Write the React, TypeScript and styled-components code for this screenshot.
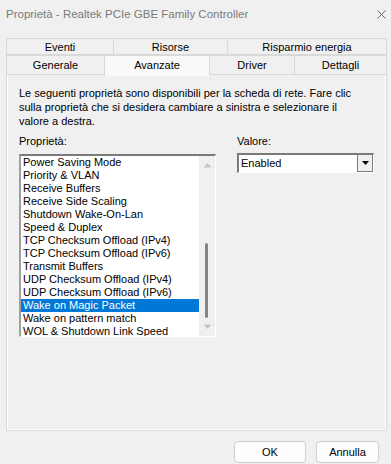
import styled, { createGlobalStyle } from 'styled-components';

const GlobalStyle = createGlobalStyle`
  html, body {
    margin: 0;
    padding: 0;
    background: #f0f0f0;
  }
  body {
    font-family: "Liberation Sans", Arial, sans-serif;
    font-size: 11px;
    color: #000;
  }
`;

const Window = styled.div`
  width: 391px;
  height: 464px;
  display: flex;
  flex-direction: column;
  background: #f0f0f0;
  overflow: hidden;
`;

const TitleBar = styled.div`
  height: 28px;
  display: flex;
  align-items: center;
  justify-content: space-between;
  padding: 0 4px 0 6px;
  color: #7a7a7a;
  font-size: 11.5px;
`;

const CloseIcon = styled.svg`
  width: 9px;
  height: 9px;
  margin-right: 1px;
`;

const TabStrip = styled.div`
  margin: 10px 4px 0 6px;
  display: flex;
  flex-direction: column;
`;

const TabRow = styled.div<{ $cols: string; $height: number }>`
  display: grid;
  grid-template-columns: ${(p) => p.$cols};
  height: ${(p) => p.$height}px;
  align-items: end;
`;

const Tab = styled.div<{ $active?: boolean }>`
  box-sizing: border-box;
  height: ${(p) => (p.$active ? '21px' : '100%')};
  margin-bottom: ${(p) => (p.$active ? '-1px' : '0')};
  display: flex;
  align-items: center;
  justify-content: center;
  padding-bottom: ${(p) => (p.$active ? '3px' : '0')};
  background: ${(p) => (p.$active ? '#f9f9f9' : '#f0f0f0')};
  border: 1px solid #d9d9d9;
  border-bottom: ${(p) => (p.$active ? 'none' : '1px solid #d9d9d9')};
  border-right: none;
  position: relative;
  z-index: ${(p) => (p.$active ? 2 : 1)};
  &:last-child {
    border-right: 1px solid #d9d9d9;
  }
`;

const Panel = styled.div`
  box-sizing: border-box;
  margin: 0 4px 0 6px;
  height: 358px;
  border: 1px solid #d9d9d9;
  box-shadow: inset 1px 1px 0 #fff, inset -1px -1px 0 #fff;
  background: #f0f0f0;
  padding: 12px 12px 0 12px;
`;

const Description = styled.p`
  margin: 0;
  line-height: 14px;
  white-space: nowrap;
`;

const Fields = styled.div`
  margin-top: 7px;
  display: grid;
  grid-template-columns: 197px 137px;
  column-gap: 21px;
`;

const Label = styled.div<{ $h: number }>`
  height: ${(p) => p.$h}px;
  line-height: 13px;
`;

const ListBox = styled.div`
  box-sizing: border-box;
  height: 183px;
  background: #fff;
  border-style: solid;
  border-width: 2px 1px 1px 2px;
  border-color: #7a7a7a #fff #fff #a0a0a0;
  display: flex;
  overflow: hidden;
`;

const Items = styled.div`
  flex: 1;
  display: flex;
  flex-direction: column;
`;

const Item = styled.div<{ $selected?: boolean }>`
  height: 13px;
  line-height: 13px;
  padding-left: 2px;
  white-space: nowrap;
  background: ${(p) => (p.$selected ? '#0078d7' : 'transparent')};
  color: ${(p) => (p.$selected ? '#fff' : '#000')};
`;

const ScrollBar = styled.div`
  width: 16px;
  background: #f0f0f0;
  display: flex;
  flex-direction: column;
  align-items: center;
  justify-content: space-between;
  padding: 6px 0;
  box-sizing: border-box;
  position: relative;
`;

const Thumb = styled.div`
  position: absolute;
  left: 6px;
  top: 87px;
  width: 3px;
  height: 75px;
  border-radius: 2px;
  background: #858585;
`;

const Arrow = styled.svg`
  width: 9px;
  height: 6px;
`;

const Select = styled.div`
  box-sizing: border-box;
  height: 20px;
  background: #fff;
  border-style: solid;
  border-width: 2px 1px 1px 2px;
  border-color: #7a7a7a #fff #fff #7a7a7a;
  display: flex;
  align-items: stretch;
`;

const SelectValue = styled.div`
  flex: 1;
  padding-left: 2px;
  line-height: 16px;
`;

const SelectButton = styled.div`
  box-sizing: border-box;
  width: 16px;
  background: #f0f0f0;
  border: 1px solid #7a7a7a;
  border-top: none;
  display: flex;
  align-items: center;
  justify-content: center;
`;

const Footer = styled.div`
  flex: 1;
  display: flex;
  justify-content: flex-end;
  align-items: flex-start;
  gap: 10px;
  padding: 10px 12px 0 0;
`;

const Button = styled.div<{ $w: number }>`
  box-sizing: border-box;
  width: ${(p) => p.$w}px;
  height: 22px;
  background: #fdfdfd;
  border: 1px solid #cfcfcf;
  border-radius: 4px;
  display: flex;
  align-items: center;
  justify-content: center;
`;

const properties = [
  'Power Saving Mode',
  'Priority & VLAN',
  'Receive Buffers',
  'Receive Side Scaling',
  'Shutdown Wake-On-Lan',
  'Speed & Duplex',
  'TCP Checksum Offload (IPv4)',
  'TCP Checksum Offload (IPv6)',
  'Transmit Buffers',
  'UDP Checksum Offload (IPv4)',
  'UDP Checksum Offload (IPv6)',
  'Wake on Magic Packet',
  'Wake on pattern match',
  'WOL & Shutdown Link Speed',
];

const App: React.FC = () => {
  return (
    <Window>
      <GlobalStyle />
      <TitleBar>
        <span>Proprietà - Realtek PCIe GBE Family Controller</span>
        <CloseIcon viewBox="0 0 9 9">
          <path d="M0.5 0.5 L8.5 8.5 M8.5 0.5 L0.5 8.5" stroke="#6b6b6b" strokeWidth="1" fill="none" />
        </CloseIcon>
      </TitleBar>

      <TabStrip>
        <TabRow $cols="107px 114px 1fr" $height={17}>
          <Tab>Eventi</Tab>
          <Tab>Risorse</Tab>
          <Tab>Risparmio energia</Tab>
        </TabRow>
        <TabRow $cols="98px 105px 85px 1fr" $height={18}>
          <Tab>Generale</Tab>
          <Tab $active>Avanzate</Tab>
          <Tab>Driver</Tab>
          <Tab>Dettagli</Tab>
        </TabRow>
      </TabStrip>

      <Panel>
        <Description>
          Le seguenti proprietà sono disponibili per la scheda di rete. Fare clic
          <br />
          sulla proprietà che si desidera cambiare a sinistra e selezionare il
          <br />
          valore a destra.
        </Description>

        <Fields>
          <div>
            <Label $h={19}>Proprietà:</Label>
            <ListBox>
              <Items>
                {properties.map((p) => (
                  <Item key={p} $selected={p === 'Wake on Magic Packet'}>
                    {p}
                  </Item>
                ))}
              </Items>
              <ScrollBar>
                <Arrow viewBox="0 0 9 6">
                  <path d="M0.5 5.5 L4.5 1 L8.5 5.5 Z" fill="#c5c5c5" />
                </Arrow>
                <Thumb />
                <Arrow viewBox="0 0 9 6">
                  <path d="M0.5 0.5 L4.5 5 L8.5 0.5 Z" fill="#c5c5c5" />
                </Arrow>
              </ScrollBar>
            </ListBox>
          </div>
          <div>
            <Label $h={18}>Valore:</Label>
            <Select>
              <SelectValue>Enabled</SelectValue>
              <SelectButton>
                <svg width="7" height="4" viewBox="0 0 7 4">
                  <path d="M0 0 H7 L3.5 4 Z" fill="#000" />
                </svg>
              </SelectButton>
            </Select>
          </div>
        </Fields>
      </Panel>

      <Footer>
        <Button $w={72}>OK</Button>
        <Button $w={63}>Annulla</Button>
      </Footer>
    </Window>
  );
};

export default App;
